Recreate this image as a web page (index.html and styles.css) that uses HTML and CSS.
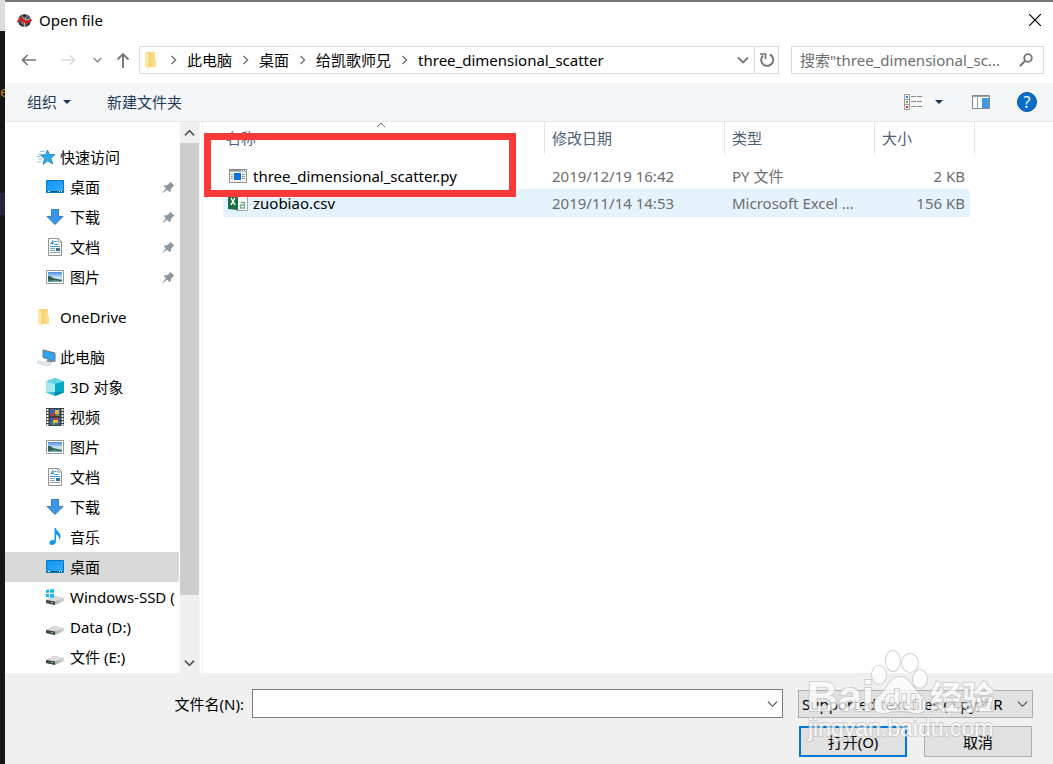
FILE: index.html
```html
<!DOCTYPE html>
<html lang="zh-CN">
<head>
<meta charset="utf-8">
<title>Open file</title>
<link rel="stylesheet" href="styles.css">
</head>
<body>
<svg class="defs" aria-hidden="true">
  <defs>
    <linearGradient id="gold" x1="0" x2="1"><stop offset="0" stop-color="#f3cf6d"/><stop offset="1" stop-color="#fbe08f"/></linearGradient>
    <linearGradient id="sky" x1="0" y1="0" x2="1" y2="1"><stop offset="0" stop-color="#0c97f2"/><stop offset="1" stop-color="#35adff"/></linearGradient>
    <linearGradient id="photo" x1="0" y1="0" x2="0" y2="1"><stop offset="0" stop-color="#4a8be0"/><stop offset="0.6" stop-color="#d5ecfb"/><stop offset="1" stop-color="#5f9fae"/></linearGradient>
    <linearGradient id="metal" x1="0" x2="1"><stop offset="0" stop-color="#8d8d8d"/><stop offset="1" stop-color="#d2d2d4"/></linearGradient>
    <symbol id="folder" viewBox="0 0 16 18"><path d="M2 1h9v7l1 1v7H2z" fill="url(#gold)"/><path d="M1 1l4 2v15l-4-2z" fill="#ffe9a6"/><path d="M5 3v14" stroke="#eac45f" stroke-width=".6"/></symbol>
    <symbol id="star" viewBox="0 0 20 18"><path d="M10.500 2l2 4.800 5.500-.3-4.200 3.700 1.800 5.600-4.800-3-4.700 3.400 1.500-5.700-4.100-3.400 5.200-.4z" fill="#2eaaf0" stroke="#1681c4" stroke-width=".9"/><path d="M3 3.500h5M1 6h4M0 8.500h3M1 11h4M0 14h4" stroke="#8fc8ea" stroke-width="1"/></symbol>
    <symbol id="desktop" viewBox="0 0 18 18"><path d="M.5 2.500h17v12H.5z" fill="url(#sky)" stroke="#0b76bd"/><path d="M1 13.500h16" stroke="#095d98"/><path d="M2 13.500h2M13 13.500h1M15 13.500h1" stroke="#fff"/></symbol>
    <symbol id="download" viewBox="0 0 18 18"><path d="M5.500 1.500h7v7H17L9 16.500 1 8.500h4.500z" fill="#3c95e6" stroke="#2874b9" stroke-width=".9"/></symbol>
    <symbol id="document" viewBox="0 0 18 18"><path d="M2.500.5h10l3 3v14h-13z" fill="#fff" stroke="#929292"/><path d="M12 .5v3.500h3.500" fill="none" stroke="#929292"/><path d="M4.500 6.500L7 2.500v4M5 5.500h2" fill="none" stroke="#2589ca"/><path d="M8.500 3.500h2M8.500 6.500h4M4 8.500h10" stroke="#3594d0"/><path d="M4 10.500h5M4 12.500h5M4 14.500h10" stroke="#8aa1ae"/><path d="M10 10h4v3h-4z" fill="#39749c"/></symbol>
    <symbol id="picture" viewBox="0 0 18 18"><path d="M.5 2.500h17v13H.5z" fill="#fff" stroke="#999"/><path d="M2 4h14v10H2z" fill="url(#photo)"/><path d="M2 8q3-.5 5 2l9 2v1l-8-.5-6 .5z" fill="#315f51"/></symbol>
    <symbol id="computer" viewBox="0 0 20 18"><path d="M6 2l12 3v8.500L6 9.500z" fill="#2da4ed" stroke="#667785"/><path d="M11 11.500l5 2-1 1-6-1z" fill="#798894"/><path d="M1 13l10 2 3 1-4 2-10-3z" fill="#e6eaed" stroke="#bcc3c9" stroke-width=".6"/></symbol>
    <symbol id="cube" viewBox="0 0 18 18"><path d="M9 0l9 3.500v11L9 18l-9-3.500v-11z" fill="#23b9cf"/><path d="M9 0l9 3.500L9 6 0 3.500z" fill="#64d5e3"/><path d="M0 3.500L9 6v8l-9 .5z" fill="#a5e8ef"/><path d="M9 6l9-2.500v11L9 14z" fill="#05a9c6"/><path d="M9 14l9 .5L9 18z" fill="#0784a6"/></symbol>
    <symbol id="film" viewBox="0 0 18 18"><path d="M0 0h18v18H0z" fill="#3d3d3d"/><path d="M1.500 1v17M16.500 1v17" stroke="#eee" stroke-width="2" stroke-dasharray="2 1"/><path d="M4 1h10v7H4zM4 10h10v7H4z" fill="#3665b2"/><path d="M5 5h4v3H5z" fill="#c6353a"/><path d="M9 2h4v4H9zM7 12h5v3H7z" fill="#e5bd2e"/><path d="M10 6h3v2h-3zM6 15h3v2H6z" fill="#5c9942"/><path d="M8 10h4v2H8z" fill="#cf3c36"/></symbol>
    <symbol id="music" viewBox="0 0 18 18"><path d="M8.500 0h1.500c0 3 4.500 4 4.500 8 0 2-.5 3-1.500 4 .5-3.500-1-5-3-5.500V13c0 4.500-6.500 5.500-6.500 2 0-2.500 2.500-3.500 5-2.500z" fill="#0c9df0"/></symbol>
    <symbol id="drive" viewBox="0 0 18 18"><path d="M0 12l8-4 10 2v3l-9 4-9-2z" fill="url(#metal)"/><path d="M0 12l8-4 10 2-9 3.500z" fill="#dcdcdf"/><path d="M0 12l9 1.500V17l-9-2z" fill="#454545"/><path d="M5 14.500h2" stroke="#4de44d"/></symbol>
    <symbol id="sysdrive" viewBox="0 0 18 18"><use href="#drive"/><path d="M0 2l3-.5v3.200H0zM4 1.400L8 1v3.700H4zM0 6h3v3.200L0 9zM4 6h4v4l-4-.6z" fill="#18baf0"/></symbol>
    <symbol id="pin" viewBox="0 0 14 14"><path d="M8.500.5l5 4.700-1.300.4-2.700 3.200v2l-1 1.200-3-2.700L.8 13l-.3-.4 3.700-4.700-2.400-2.500L3 4.500l2.400.1 3-2.500z" fill="#8c98a1"/></symbol>
    <symbol id="chevron" viewBox="0 0 7 10"><path d="M1.500 1l4 4-4 4" fill="none" stroke="#777" stroke-width="1.500"/></symbol>
    <symbol id="down" viewBox="0 0 12 8"><path d="M1 1.500l5 5 5-5" fill="none" stroke="currentColor" stroke-width="1.800"/></symbol>
    <symbol id="caret" viewBox="0 0 8 4"><path d="M0 0h8L4 4z" fill="#17365f"/></symbol>
  </defs>
</svg>
<div class="desktop">
  <aside class="backdrop"><span class="glyph">e</span></aside>
  <main class="dialog">
    <header class="titlebar">
      <svg class="app-icon" viewBox="0 0 16 16"><circle cx="8" cy="8" r="7" fill="#555"/><path d="M8 8L5 1M8 8l3-7M8 8l7-2M8 8L1 6M8 8l-5 6M8 8l5 6M8 8v7" stroke="#ddd" stroke-width=".8"/><path d="M6 3h4M3 11l2 2M13 11l-2 2" stroke="#222" stroke-width="2"/><path d="M.5 9.500L5 6l5 4.500L15.500 7" fill="none" stroke="#e3141b" stroke-width="2.300"/></svg>
      <h1>Open file</h1>
      <button class="close" aria-label="Close"><svg viewBox="0 0 12 12"><path d="M0 0l12 12M12 0L0 12" stroke="#000" stroke-width="1.200"/></svg></button>
    </header>
    <div class="navbar">
      <div class="history">
        <button aria-label="Back"><svg class="arrow" viewBox="0 0 16 16"><path d="M15 8H1.500M6.500 3L1.500 8l5 5" fill="none" stroke="#777" stroke-width="1.700"/></svg></button>
        <button aria-label="Forward"><svg class="arrow" viewBox="0 0 16 16"><path d="M1 8h13.500M9.500 3l5 5-5 5" fill="none" stroke="#ddd" stroke-width="1.700"/></svg></button>
        <button class="recent" aria-label="Recent locations"><svg viewBox="0 0 12 8"><use href="#down"/></svg></button>
        <button aria-label="Up"><svg class="arrow" viewBox="0 0 16 16"><path d="M8 16V2M2.500 7.500L8 2l5.500 5.500" fill="none" stroke="#777" stroke-width="1.900"/></svg></button>
      </div>
      <nav class="address" aria-label="Address">
        <svg class="address-folder"><use href="#folder"/></svg>
        <svg class="sep"><use href="#chevron"/></svg><a href="#">此电脑</a>
        <svg class="sep"><use href="#chevron"/></svg><a href="#">桌面</a>
        <svg class="sep"><use href="#chevron"/></svg><a href="#">给凯歌师兄</a>
        <svg class="sep"><use href="#chevron"/></svg><a href="#">three_dimensional_scatter</a>
        <button class="address-drop" aria-label="Previous locations"><svg class="drop-icon"><use href="#down"/></svg></button>
        <button class="refresh" aria-label="Refresh"><svg viewBox="0 0 16 16"><path d="M11 2.500A6 6 0 1 1 4 3.500" fill="none" stroke="#777" stroke-width="2"/><path d="M1 2h5.500v5" fill="none" stroke="#777" stroke-width="1.700"/></svg></button>
      </nav>
      <label class="search">
        <input type="text" aria-label="Search" placeholder='搜索"three_dimensional_sc...'>
        <svg viewBox="0 0 14 14"><circle cx="9" cy="5" r="3.800" fill="none" stroke="#777" stroke-width="1.800"/><path d="M6.300 7.700L.8 13.200" stroke="#777" stroke-width="2"/></svg>
      </label>
    </div>
    <div class="toolbar">
      <button>组织<svg class="caret"><use href="#caret"/></svg></button>
      <button class="new-folder">新建文件夹</button>
      <button class="view" aria-label="View"><svg class="view-icon" viewBox="0 0 18 16"><path d="M.5.5h5v15h-5zM.5 5.500h5M.5 10.500h5" fill="#fff" stroke="#999"/><path d="M7 2.500h5M13 2.500h5M7 7.500h5M13 7.500h5M7 12.500h5M13 12.500h5" stroke="#888"/><path d="M2 2h2v2H2z" fill="#237fc5"/><path d="M2 7h2v2H2z" fill="#73a36a"/><path d="M2 12h2v2H2z" fill="#d42e24"/></svg><svg class="caret"><use href="#caret"/></svg></button>
      <button aria-label="Preview pane"><svg class="preview" viewBox="0 0 18 14"><path d="M.5.5h17v13H.5z" fill="#fff" stroke="#83898d"/><path d="M1 1.500h16M5.500 2v11" stroke="#9ba0a4"/><path d="M10 3h7v10h-7z" fill="#3f9be4"/></svg></button>
      <button class="help" aria-label="Help">?</button>
    </div>
    <div class="content">
      <nav class="tree" aria-label="Folders">
        <ul>
          <li><a href="#"><svg class="wide"><use href="#star"/></svg>快速访问</a></li>
          <li class="child"><a href="#"><svg><use href="#desktop"/></svg>桌面<svg class="pin"><use href="#pin"/></svg></a></li>
          <li class="child"><a href="#"><svg><use href="#download"/></svg>下载<svg class="pin"><use href="#pin"/></svg></a></li>
          <li class="child"><a href="#"><svg><use href="#document"/></svg>文档<svg class="pin"><use href="#pin"/></svg></a></li>
          <li class="child"><a href="#"><svg><use href="#picture"/></svg>图片<svg class="pin"><use href="#pin"/></svg></a></li>
        </ul>
        <ul>
          <li><a href="#"><svg class="wide"><use href="#folder" width="16" height="18"/></svg>OneDrive</a></li>
        </ul>
        <ul>
          <li><a href="#"><svg class="wide"><use href="#computer"/></svg>此电脑</a></li>
          <li class="child"><a href="#"><svg><use href="#cube"/></svg>3D 对象</a></li>
          <li class="child"><a href="#"><svg><use href="#film"/></svg>视频</a></li>
          <li class="child"><a href="#"><svg><use href="#picture"/></svg>图片</a></li>
          <li class="child"><a href="#"><svg><use href="#document"/></svg>文档</a></li>
          <li class="child"><a href="#"><svg><use href="#download"/></svg>下载</a></li>
          <li class="child"><a href="#"><svg><use href="#music"/></svg>音乐</a></li>
          <li class="child selected"><a href="#"><svg><use href="#desktop"/></svg>桌面</a></li>
          <li class="child"><a href="#"><svg><use href="#sysdrive"/></svg>Windows-SSD (</a></li>
          <li class="child"><a href="#"><svg><use href="#drive"/></svg>Data (D:)</a></li>
          <li class="child"><a href="#"><svg><use href="#drive"/></svg>文件 (E:)</a></li>
        </ul>
      </nav>
      <div class="scrollbar">
        <button aria-label="Scroll up"><svg class="flip" viewBox="0 0 12 8"><use href="#down"/></svg></button>
        <div class="thumb"></div>
        <div class="track"></div>
        <button aria-label="Scroll down"><svg viewBox="0 0 12 8"><use href="#down"/></svg></button>
      </div>
      <section class="files">
        <table>
          <colgroup><col class="c-name"><col class="c-date"><col class="c-type"><col class="c-size"><col class="c-end"></colgroup>
          <thead><tr><th>名称<svg class="sort" viewBox="0 0 10 6"><path d="M1 5l4-4 4 4" fill="none" stroke="#666"/></svg></th><th>修改日期</th><th>类型</th><th colspan="2">大小</th></tr></thead>
          <tbody>
            <tr><td><span class="file"><svg viewBox="0 0 20 18"><path d="M1.500 2.500h17v13h-17z" fill="#f4f4f4" stroke="#8b9095"/><path d="M1 3.500h18" stroke="#8b9095" stroke-width="2"/><path d="M13 3.500h1M15 3.500h1M17 3.500h1" stroke="#fff"/><path d="M6 6h7v7H6z" fill="#0b74d8"/><path d="M3 7.500h2M3 9.500h2M3 11.500h2M14 7.500h3M14 9.500h3M14 11.500h3" stroke="#999"/></svg>three_dimensional_scatter.py</span></td><td>2019/12/19 16:42</td><td>PY 文件</td><td>2 KB</td></tr>
            <tr class="hover"><td><span class="file"><svg viewBox="0 0 20 18"><path d="M8.500 1.500h11v15h-11z" fill="#fff" stroke="#a5a5a5"/><path d="M12.500 8.500h4V14h-4v-3h4" fill="none" stroke="#76b08c" stroke-width="1.300"/><path d="M0 1l10-1v16L0 15z" fill="#1d7044"/><path d="M3 4l4 7M7 4l-4 7" stroke="#fff" stroke-width="1.500"/></svg>zuobiao.csv</span></td><td>2019/11/14 14:53</td><td>Microsoft Excel ...</td><td>156 KB</td></tr>
          </tbody>
        </table>
        <div class="highlight"></div>
      </section>
    </div>
    <footer class="footer">
      <div class="filename-row">
        <label for="filename">文件名(N):</label>
        <div class="combo"><input id="filename" type="text"><button aria-label="Show file names"><svg viewBox="0 0 12 8"><path d="M1 1.500l5 5 5-5" fill="none" stroke="#444" stroke-width="1.200"/></svg></button></div>
        <div class="filter"><select aria-label="File type"><option>Supported text files (*.py;*.R</option></select><svg viewBox="0 0 12 8"><path d="M1 1.500l5 5 5-5" fill="none" stroke="#444" stroke-width="1.200"/></svg></div>
      </div>
      <div class="actions"><button class="primary">打开(O)</button><button>取消</button></div>
    </footer>
    <svg class="watermark" viewBox="0 0 200 100" aria-hidden="true">
      <g class="mark">
        <text class="brand" x="2" y="59">Bai</text>
        <text class="brand-cn" x="125" y="57">经验</text>
        <ellipse cx="74" cy="23" rx="7" ry="9"/><ellipse cx="88" cy="9" rx="7" ry="10"/><ellipse cx="105" cy="11" rx="8" ry="9"/><ellipse cx="115" cy="27" rx="7" ry="9"/>
        <path d="M95 25c-10 0-12 11-20 18-12 11-4 20 5 18 11-3 19-3 30 0 10 2 15-8 6-17-9-8-11-19-21-19z"/>
        <text class="brand-du" x="79" y="57">du</text>
        <text class="site" x="3" y="84">jingyan.baidu.com</text>
      </g>
    </svg>
  </main>
</div>
</body>
</html>
```
FILE: styles.css
```css
* { box-sizing: border-box; }
body, button, input, select {
  font-family: "Noto Sans", "Noto Sans CJK SC", sans-serif;
  font-size: 15px;
  line-height: 20px;
  color: #000;
}
body { margin: 0; }
button { padding: 0; border: 0; background: none; display: flex; align-items: center; justify-content: center; }
a { color: inherit; text-decoration: none; }
svg { flex: none; display: block; }
.defs { position: absolute; width: 0; height: 0; }
.desktop { display: flex; min-height: 100vh; }
.backdrop {
  width: 5px;
  padding-top: 81px;
  overflow: hidden;
  background: linear-gradient(#dcdcdc 31px, #161616 31px, #161616 193px, #25253d 193px, #25253d 215px, #161616 215px);
}
.glyph { color: #c87a10; }
.dialog { position: relative; flex: 1; min-width: 0; display: flex; flex-direction: column; background: #fff; border-top: 2px solid #777; }

.titlebar { display: flex; align-items: center; height: 36px; padding: 0 12px; gap: 7px; }
.titlebar h1 { flex: 1; margin: 0; font-size: 15px; font-weight: 400; }
.app-icon { width: 15px; height: 15px; }
.close { width: 12px; height: 12px; }
.close svg { width: 12px; height: 12px; }

.navbar { display: flex; align-items: center; height: 45px; padding: 0 9px 1px 16px; gap: 12px; }
.history { display: flex; align-items: center; gap: 17px; width: 106px; color: #777; }
.history button:nth-child(2) { margin-left: 6px; }
.history .recent { margin-right: -4px; color: #777; }
.arrow { width: 16px; height: 16px; }
.recent svg { width: 9px; height: 6px; }
.address { flex: 1; display: flex; align-items: center; gap: 10px; height: 28px; padding-left: 4px; border: 1px solid #d9d9d9; min-width: 0; white-space: nowrap; }
.address-folder { width: 16px; height: 18px; }
.sep { width: 7px; height: 10px; }
.drop-icon { width: 12px; height: 8px; }
.address-drop { margin-left: auto; margin-right: -5px; color: #777; }
.refresh { align-self: stretch; width: 24px; border-left: 1px solid #d9d9d9; }
.refresh svg { width: 16px; height: 16px; }
.search { display: flex; align-items: center; width: 253px; height: 28px; padding: 0 10px 0 8px; border: 1px solid #d9d9d9; }
.search input { flex: 1; min-width: 0; padding: 0; border: 0; background: none; outline: 0; }
.search input::placeholder { color: #6d6d6d; opacity: 1; }
.search svg { width: 14px; height: 14px; }

.toolbar { display: flex; align-items: center; height: 39px; padding: 0 16px 0 22px; background: #f5f6f7; border-bottom: 1px solid #e5e6e8; }
.toolbar button { color: #1e395b; }
.caret { width: 8px; height: 4px; margin-left: 6px; }
.toolbar .new-folder { margin-left: 36px; }
.toolbar .view { margin-left: auto; margin-right: 29px; }
.view-icon { width: 18px; height: 16px; }
.view .caret { margin-left: 13px; }
.preview { width: 18px; height: 14px; }
.toolbar .help { width: 20px; height: 20px; margin-left: 27px; border: 1px solid #07559e; border-radius: 50%; background: #0a6ccb; color: #fff; font-size: 16px; }

.content { flex: 1; display: flex; min-height: 0; }
.tree { width: 175px; padding-top: 20px; overflow: hidden; white-space: nowrap; }
.tree ul { list-style: none; margin: 0 0 10px; padding: 0; }
.tree ul:last-child { margin-bottom: 0; }
.tree li { height: 30px; width: 174px; padding-left: 32px; overflow: hidden; }
.tree .child { padding-left: 41px; }
.tree .selected { background: #d9d9d9; }
.tree a { display: flex; align-items: center; height: 30px; gap: 6px; }
.tree svg { width: 18px; height: 18px; }
.tree .wide { width: 20px; margin-right: -3px; }
.tree .pin { width: 13px; height: 13px; margin-left: auto; margin-right: 4px; }
.scrollbar { display: flex; flex-direction: column; width: 20px; background: #f0f0f0; border-right: 1px solid #f5f5f5; }
.scrollbar button { height: 21px; color: #555; }
.scrollbar svg { width: 11px; height: 8px; }
.flip { transform: rotate(180deg); }
.thumb { flex: 8; background: #cdcdcd; }
.track { flex: 1; }
.files { position: relative; flex: 1; min-width: 0; margin-left: 2px; padding-left: 20px; border-left: 1px solid #f0f0f0; }
table { table-layout: fixed; width: 752px; border-collapse: separate; border-spacing: 0; }
.c-name { width: 322px; }
.c-date { width: 180px; }
.c-type { width: 150px; }
.c-size { width: 95px; }
.c-end { width: 5px; }
th { position: relative; height: 33px; padding: 0 7px 2px; border-right: 1px solid #e5e5e5; color: #4c607a; font-weight: 400; text-align: left; }
th:first-child { padding-left: 3px; }
.sort { position: absolute; top: 0; left: 153px; width: 10px; height: 6px; }
tbody::before { content: ""; display: block; height: 7px; }
td { height: 27px; padding: 0 7px; color: #6d6d6d; white-space: nowrap; }
td:first-child { padding-left: 5px; color: #000; }
td:nth-child(4) { text-align: right; padding-right: 5px; }
.hover td { height: 28px; background: #e5f3ff; }
.file { display: flex; align-items: center; gap: 5px; }
.file svg { width: 20px; height: 18px; }
.highlight { position: absolute; left: 1px; top: 11px; width: 312px; height: 64px; border: 7px solid #fc3939; }

.footer { padding: 16px 20px 7px 20px; background: #f0f0f0; }
.filename-row { display: flex; align-items: center; }
.filename-row label { width: 219px; text-align: right; }
.combo { flex: 1; display: flex; height: 29px; margin: 0 15px 0 8px; border: 1px solid #7a7a7a; background: #fff; }
.combo input { flex: 1; min-width: 0; border: 0; outline: 0; background: none; }
.combo button { width: 20px; }
.combo svg { width: 11px; height: 8px; }
.filter { position: relative; width: 235px; }
.filter select { display: block; width: 100%; height: 28px; padding: 0 20px 0 3px; appearance: none; border: 1px solid #adadad; border-radius: 0; background: #e1e1e1; }
.filter svg { position: absolute; right: 5px; top: 10px; width: 11px; height: 8px; pointer-events: none; }
.actions { display: flex; justify-content: flex-end; gap: 17px; margin: 8px 1px 0 0; }
.actions button { width: 108px; height: 31px; border: 1px solid #adadad; background: #e1e1e1; }
.actions .primary { border: 2px solid #0078d7; }

.watermark { position: absolute; right: 48px; bottom: 12px; width: 200px; height: 100px; pointer-events: none; overflow: visible; }
.mark { fill: #fff; stroke: #c4c4c4; stroke-width: 2px; opacity: 0.75; paint-order: stroke; }
.brand, .brand-du, .brand-cn, .site { font-family: "Liberation Sans", "Noto Sans CJK SC", sans-serif; font-weight: 700; }
.brand { font-size: 43px; }
.brand-du { font-size: 27px; }
.brand-cn { font-size: 32px; }
.site { font-size: 23px; font-weight: 400; }
```
